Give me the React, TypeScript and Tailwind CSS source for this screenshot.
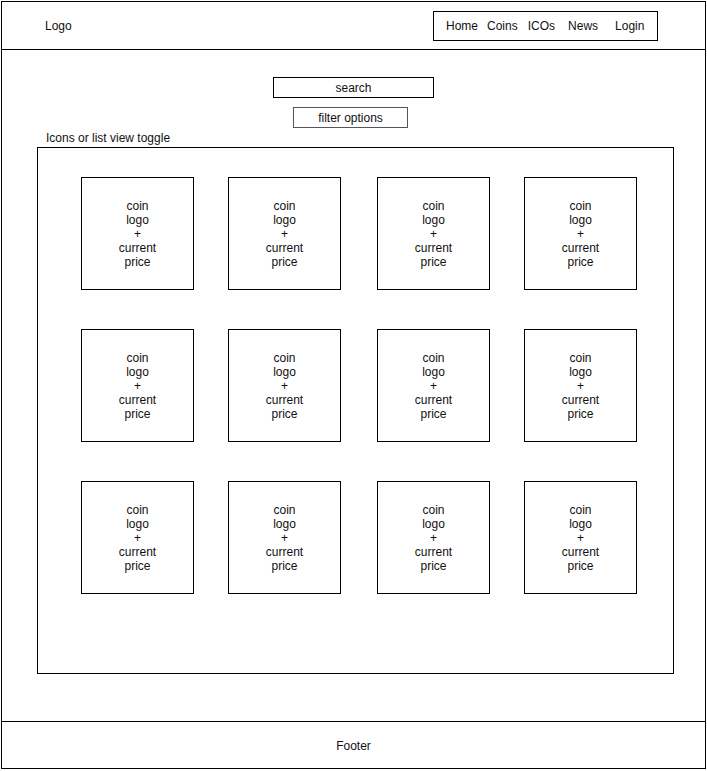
// App.tsx
// Wireframe of a coin listing page: header, search, filters, coin grid, footer

const navItems = [
  { label: 'Home', className: '' },
  { label: 'Coins', className: 'ml-[9px]' },
  { label: 'ICOs', className: 'ml-[10px]' },
  { label: 'News', className: 'ml-[13px]' },
  { label: 'Login', className: 'ml-[17px]' },
];

const cards = Array.from({ length: 12 }, (_, i) => i);

function CoinCard() {
  return (
    <div className="w-[113px] h-[113px] border border-black flex flex-col items-center justify-center text-[12px] leading-[14px] text-[#111]">
      <span>coin</span>
      <span>logo</span>
      <span>+</span>
      <span>current</span>
      <span>price</span>
    </div>
  );
}

export default function App() {
  return (
    <div
      className="w-[707px] h-[771px] bg-white p-px"
      style={{ fontFamily: '"Liberation Sans", Arial, sans-serif' }}
    >
      <div className="w-[705px] h-[768px] border border-black flex flex-col">
        {/* Header */}
        <header className="h-[48px] shrink-0 border-b border-black flex items-start">
          <div className="ml-[43px] mt-[16px] text-[12px] leading-[16px] text-[#111]">Logo</div>
          <nav className="ml-auto mr-[47px] mt-[9px] w-[225px] h-[30px] border border-black flex items-center pl-[12px] text-[12px] text-[#111]">
            {navItems.map(item => (
              <span key={item.label} className={item.className}>
                {item.label}
              </span>
            ))}
          </nav>
        </header>

        {/* Main */}
        <main className="flex-1 flex flex-col">
          <div className="ml-[271px] mt-[27px] w-[161px] h-[21px] border border-black flex items-center justify-center text-[12px] text-[#111]">
            search
          </div>
          <div className="ml-[291px] mt-[9px] w-[115px] h-[21px] border border-[#555] flex items-center justify-center text-[12px] text-[#111]">
            filter options
          </div>
          <div className="ml-[44px] mt-px h-[18px] leading-[18px] text-[12px] text-[#111]">
            Icons or list view toggle
          </div>
          <div className="ml-[35px] w-[637px] h-[527px] border border-black pl-[43px] pt-[29px]">
            <div className="grid grid-cols-[147px_149px_147px_113px] gap-y-[39px]">
              {cards.map(i => (
                <CoinCard key={i} />
              ))}
            </div>
          </div>
        </main>

        {/* Footer */}
        <footer className="h-[47px] shrink-0 border-t border-black flex items-center justify-center pt-[2px] text-[12px] text-[#111]">
          Footer
        </footer>
      </div>
    </div>
  );
}
